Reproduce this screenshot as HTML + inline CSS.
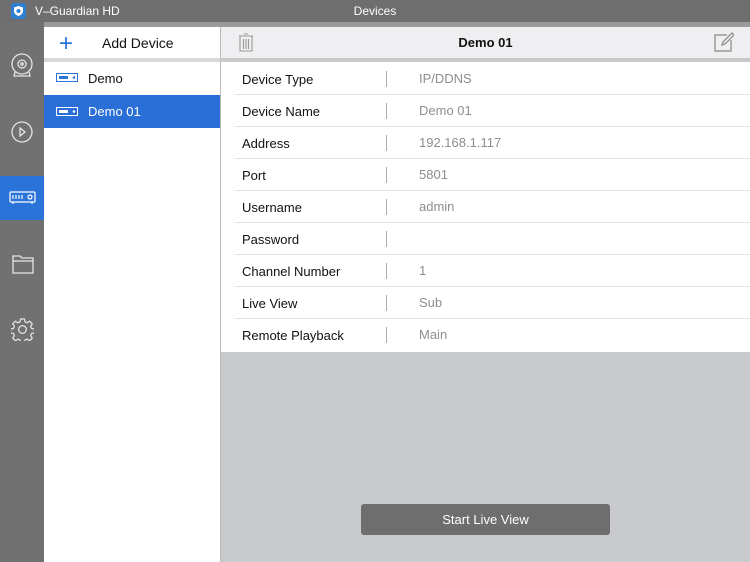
<!DOCTYPE html>
<html><head><style>
*{margin:0;padding:0;box-sizing:border-box}
body{width:750px;height:562px;overflow:hidden;background:#6f6f6f;font-family:"Liberation Sans",sans-serif;position:relative}
.abs{position:absolute}
.row{position:absolute;left:235px;width:515px;height:32px;border-bottom:1px solid #e4e4e4;font-size:13px}
.row .l{position:absolute;left:7px;top:9px;color:#111}
.row .s{position:absolute;left:151px;top:8px;width:1px;height:16px;background:#aaa}
.row .v{position:absolute;left:184px;top:8px;color:#8e8e8e}
</style></head><body>
<div class="abs" style="left:0;top:0;width:750px;height:22px;background:#6e6e6e"></div>
<svg class="abs" style="left:11px;top:3px" width="15" height="16" viewBox="0 0 15 16"><rect x="0" y="0" width="15" height="16" rx="3" fill="#2f7fd0"/><path d="M7.5 3 L12 4.5 V8 C12 10.5 10 12 7.5 13 C5 12 3 10.5 3 8 V4.5 Z" fill="#fff"/><circle cx="7.5" cy="8" r="2" fill="#2f7fd0"/></svg>
<div class="abs" style="left:35px;top:4px;color:#fff;font-size:12px">V–Guardian HD</div>
<div class="abs" style="left:0;top:4px;width:750px;text-align:center;color:#fff;font-size:12px">Devices</div>
<div class="abs" style="left:44px;top:22px;width:706px;height:5px;background:#9a9a9a"></div>
<div class="abs" style="left:0;top:22px;width:44px;height:540px;background:#717171;border-radius:8px 0 0 0"></div>
<!-- sidebar icons -->
<svg class="abs" style="left:10px;top:53px" width="24" height="26" viewBox="0 0 24 26" fill="none" stroke="#e5e5e5" stroke-width="1.3"><circle cx="12" cy="11" r="10"/><circle cx="12" cy="11" r="4"/><circle cx="12" cy="11" r="1.2"/><path d="M5 19 L4 23 H20 L19 19"/></svg>
<svg class="abs" style="left:10px;top:120px" width="24" height="24" viewBox="0 0 24 24" fill="none" stroke="#e5e5e5" stroke-width="1.3"><circle cx="12" cy="12" r="10"/><path d="M10 8 L15 12 L10 16 Z"/></svg>
<div class="abs" style="left:0;top:176px;width:44px;height:44px;background:#2a73d9"></div>
<svg class="abs" style="left:9px;top:191px" width="27" height="14" viewBox="0 0 27 14" fill="none" stroke="#fff" stroke-width="1.2"><rect x="1" y="1" width="25" height="10" rx="1"/><path d="M4 4v4M7 4v4M10 4v4M13 4v4"/><circle cx="21" cy="6" r="2"/><path d="M4 11v2M23 11v2"/></svg>
<svg class="abs" style="left:12px;top:254px" width="22" height="20" viewBox="0 0 22 20" fill="none" stroke="#e5e5e5" stroke-width="1.3"><path d="M1 2 H8 L10 4 H21 V19 H1 Z M1 7 H21"/></svg>
<svg class="abs" style="left:11px;top:318px" width="23" height="23" viewBox="0 0 24 24" fill="none" stroke="#e5e5e5" stroke-width="1.3"><path d="M10 1h4l.6 3 2.2 1 2.6-1.7 2.8 2.8-1.7 2.6 1 2.2 3 .6v4l-3 .6-1 2.2 1.7 2.6-2.8 2.8-2.6-1.7-2.2 1-.6 3h-4l-.6-3-2.2-1-2.6 1.7-2.8-2.8 1.7-2.6-1-2.2-3-.6v-4l3-.6 1-2.2-1.7-2.6 2.8-2.8 2.6 1.7 2.2-1z"/><circle cx="12" cy="12" r="4"/></svg>
<!-- left list -->
<div class="abs" style="left:44px;top:27px;width:176px;height:535px;background:#fff"></div>
<div class="abs" style="left:59px;top:30px;color:#2a73d9;font-size:24px;font-weight:300">+</div>
<div class="abs" style="left:102px;top:35px;font-size:14px;color:#111">Add Device</div>
<div class="abs" style="left:44px;top:58px;width:176px;height:4px;background:#d8d8d8"></div>
<svg class="abs" style="left:56px;top:73px" width="22" height="9" viewBox="0 0 22 9"><rect x="0.5" y="0.5" width="21" height="8" fill="#fff" stroke="#2a73d9"/><rect x="3" y="3" width="9" height="3" fill="#2a73d9"/><circle cx="18" cy="4.5" r="1.3" fill="#2a73d9"/></svg>
<div class="abs" style="left:88px;top:71px;font-size:13px;color:#111">Demo</div>
<div class="abs" style="left:44px;top:95px;width:176px;height:33px;background:#2a6ed8"></div>
<svg class="abs" style="left:56px;top:107px" width="22" height="9" viewBox="0 0 22 9"><rect x="0.5" y="0.5" width="21" height="8" fill="#2a6ed8" stroke="#fff"/><rect x="3" y="3" width="9" height="3" fill="#fff"/><circle cx="18" cy="4.5" r="1.3" fill="#fff"/></svg>
<div class="abs" style="left:88px;top:104px;font-size:13px;color:#fff">Demo 01</div>
<div class="abs" style="left:220px;top:27px;width:1px;height:535px;background:#bbb"></div>
<!-- right -->
<div class="abs" style="left:221px;top:27px;width:529px;height:31px;background:#efeff1"></div>
<div class="abs" style="left:221px;top:58px;width:529px;height:4px;background:#c9c9cc"></div>
<svg class="abs" style="left:238px;top:33px" width="16" height="19" viewBox="0 0 16 19" fill="none" stroke="#9a9a9a" stroke-width="1.1"><path d="M1 3h14M6 1h4M2 3v15h12V3M5.5 6v10M8 6v10M10.5 6v10"/></svg>
<div class="abs" style="left:221px;top:35px;width:529px;text-align:center;font-size:13px;font-weight:bold;color:#111">Demo 01</div>
<svg class="abs" style="left:714px;top:32px" width="20" height="20" viewBox="0 0 20 20" fill="none" stroke="#888" stroke-width="1.2"><path d="M13 3H1v16h16V8"/><path d="M8 13l1-3 9-9 2 2-9 9z"/></svg>
<div class="abs" style="left:221px;top:62px;width:529px;height:290px;background:#fff"></div>
<div class="abs" style="left:221px;top:352px;width:529px;height:210px;background:#c9cacd"></div>
<div class="row" style="top:63px"><span class="l">Device Type</span><span class="s"></span><span class="v">IP/DDNS</span></div>
<div class="row" style="top:95px"><span class="l">Device Name</span><span class="s"></span><span class="v">Demo 01</span></div>
<div class="row" style="top:127px"><span class="l">Address</span><span class="s"></span><span class="v">192.168.1.117</span></div>
<div class="row" style="top:159px"><span class="l">Port</span><span class="s"></span><span class="v">5801</span></div>
<div class="row" style="top:191px"><span class="l">Username</span><span class="s"></span><span class="v">admin</span></div>
<div class="row" style="top:223px"><span class="l">Password</span><span class="s"></span><span class="v"></span></div>
<div class="row" style="top:255px"><span class="l">Channel Number</span><span class="s"></span><span class="v">1</span></div>
<div class="row" style="top:287px"><span class="l">Live View</span><span class="s"></span><span class="v">Sub</span></div>
<div class="row" style="top:319px;border-bottom:none"><span class="l">Remote Playback</span><span class="s"></span><span class="v">Main</span></div>
<div class="abs" style="left:361px;top:504px;width:249px;height:31px;background:#6e6e6e;border-radius:3px;color:#fff;font-size:13px;text-align:center;line-height:31px">Start Live View</div>
</body></html>
